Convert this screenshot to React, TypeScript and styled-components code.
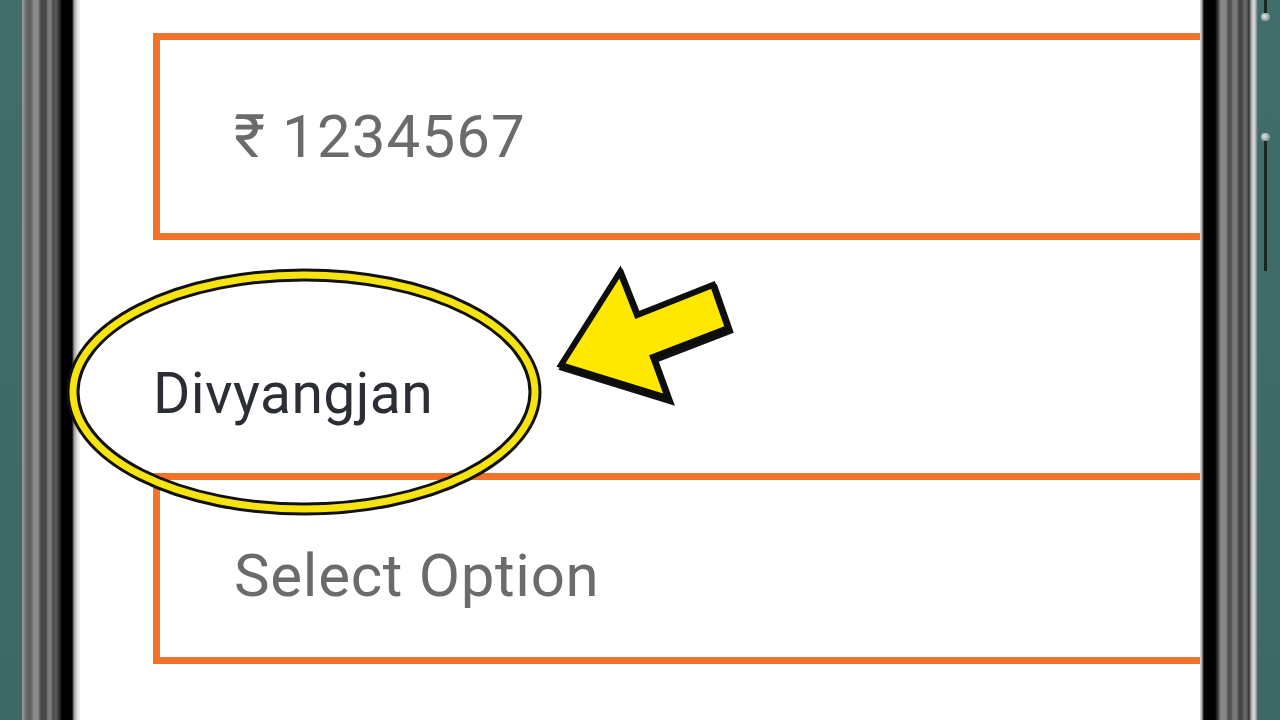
import React from "react";
import styled, { createGlobalStyle } from "styled-components";

const GlobalStyle = createGlobalStyle`
  html, body {
    margin: 0;
    padding: 0;
    background: #3f6a67;
  }
  body {
    width: 1280px;
    height: 720px;
    overflow: hidden;
    font-family: Roboto, "Noto Sans", "DejaVu Sans", sans-serif;
  }
`;

const Stage = styled.div`
  position: relative;
  display: flex;
  width: 1280px;
  height: 720px;
  overflow: hidden;
  background: linear-gradient(180deg, #416d6a 0%, #3d6865 100%);
`;

const Margin = styled.div<{ $w: number }>`
  flex: none;
  width: ${(p) => p.$w}px;
  display: flex;
  flex-direction: column;
  align-items: flex-start;
`;

const Bezel = styled.div<{ $side: "left" | "right" }>`
  flex: none;
  width: 58px;
  height: 100%;
  background: ${(p) =>
    p.$side === "left"
      ? `linear-gradient(90deg,
          #9aa3a2 0px, #6e6e6e 4px, #5a5a5a 8px, #8c8c8c 12px, #8a8a8a 16px,
          #484848 19px, #474747 24px, #7a7a7a 26px, #7b7b7b 29px, #4a4a4a 31px,
          #585858 34px, #333 37px, #000 40px, #000 50px, #9a9a9a 52px,
          #d9d9d9 55px, #f4f4f4 58px)`
      : `linear-gradient(90deg,
          #e6e6e6 0px, #9a9a9a 2px, #050505 4px, #000 15px, #3a3a3a 18px,
          #8a8a8a 21px, #858585 26px, #555 28px, #505050 31px, #7a7a7a 33px,
          #767676 37px, #444 39px, #454545 42px, #686868 44px, #5e5e5e 47px,
          #2e2e2e 49px, #9e9e9e 51px, #e4e4e4 54px, #9aa5a4 56px, #4a5f5d 58px)`};
`;

const SideLine = styled.div<{ $h: number; $mt?: number }>`
  flex: none;
  width: 3px;
  height: ${(p) => p.$h}px;
  margin-top: ${(p) => p.$mt ?? 0}px;
  margin-left: 6px;
  background: #1d2424;
`;

const SideNub = styled.div`
  flex: none;
  width: 9px;
  height: 8px;
  margin-left: 3px;
  border-radius: 4px;
  background: radial-gradient(circle at 40% 40%, #dfe5e4 0%, #93a6a4 60%, #5b706e 100%);
`;

const Screen = styled.main`
  flex: none;
  width: 1120px;
  height: 100%;
  box-sizing: border-box;
  background: #ffffff;
  overflow: hidden;
  padding: 33px 0 0 73px;
  display: flex;
  flex-direction: column;
`;

const Field = styled.div<{ $h: number; $shift?: number }>`
  flex: none;
  width: 1100px;
  height: ${(p) => p.$h}px;
  box-sizing: border-box;
  border: 7px solid #f2742b;
  display: flex;
  align-items: center;
  padding: ${(p) => p.$shift ?? 0}px 0 0 74px;
`;

const Placeholder = styled.span<{ $spacing: number }>`
  font-size: 60px;
  line-height: 60px;
  color: #6b6b6b;
  letter-spacing: ${(p) => p.$spacing}px;
  white-space: nowrap;
`;

const LabelRow = styled.div`
  flex: none;
  height: 233px;
  box-sizing: border-box;
  padding-top: 125px;
`;

const Label = styled.span`
  font-size: 57px;
  line-height: 57px;
  color: #2b2e35;
  letter-spacing: 0.4px;
  white-space: nowrap;
`;

const Overlay = styled.svg`
  position: absolute;
  left: 0;
  top: 0;
  width: 1280px;
  height: 720px;
  pointer-events: none;
`;

const arrowPts = "561,365 620,272 637,315 713,285 728,328 653,357 668,398";

export default function App() {
  return (
    <>
      <GlobalStyle />
      <Stage>
        <Margin $w={22} />
        <Bezel $side="left" />
        <Screen>
          <Field $h={207}>
            <Placeholder $spacing={1.1}>₹ 1234567</Placeholder>
          </Field>
          <LabelRow>
            <Label>Divyangjan</Label>
          </LabelRow>
          <Field $h={191} $shift={14}>
            <Placeholder $spacing={0.7}>Select Option</Placeholder>
          </Field>
        </Screen>
        <Bezel $side="right" />
        <Margin $w={22}>
          <SideLine $h={13} />
          <SideNub />
          <SideLine $h={0} $mt={112} />
          <SideNub />
          <SideLine $h={130} />
        </Margin>
        <Overlay viewBox="0 0 1280 720">
          <ellipse cx="304" cy="392" rx="231" ry="117" fill="none" stroke="#111" strokeWidth="13" />
          <ellipse cx="304" cy="392" rx="231" ry="117" fill="none" stroke="#f6e410" strokeWidth="7" />
          <polygon points={arrowPts} transform="translate(2 3)" fill="#111" stroke="#111" strokeWidth="6" strokeLinejoin="miter" />
          <polygon points={arrowPts} fill="#ffe800" stroke="#0d0d0d" strokeWidth="6" strokeLinejoin="miter" />
        </Overlay>
      </Stage>
    </>
  );
}
